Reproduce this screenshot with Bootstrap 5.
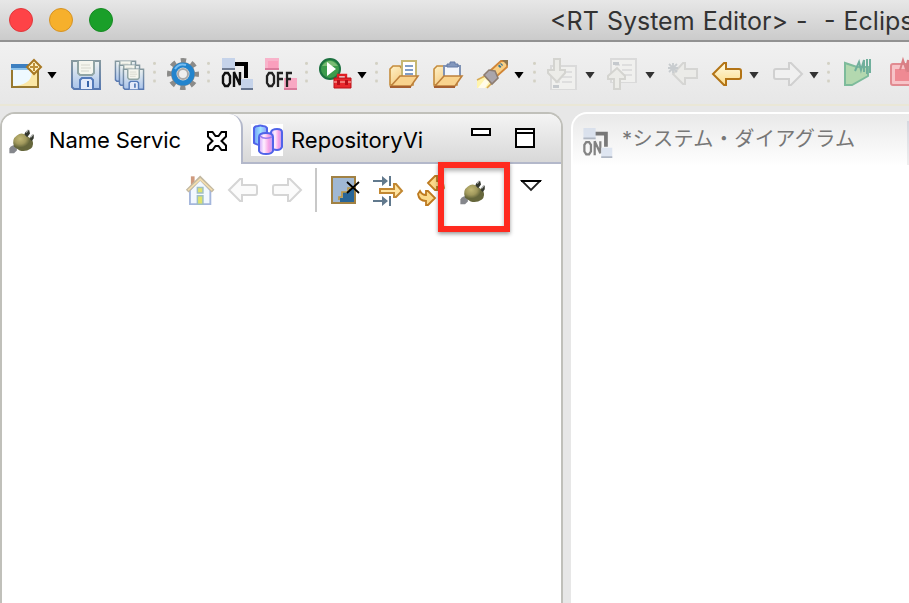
<!DOCTYPE html>
<html lang="ja">
<head>
<meta charset="utf-8">
<title>RT System Editor - Eclipse</title>
<meta name="viewport" content="width=device-width, initial-scale=1">
<link href="https://cdn.jsdelivr.net/npm/bootstrap@5.3.0/dist/css/bootstrap.min.css" rel="stylesheet">
<style>
body{height:603px;background:#e7e7e7;font-family:Inter,"Noto Sans CJK JP",sans-serif;color:#000}
svg{display:block;flex:none;overflow:visible}
.titlebar{height:42px;background:linear-gradient(#e7e7e7,#cbcbcb);border-bottom:2px solid #929292;padding-left:9px}
.light{width:24px;height:24px;margin-right:16px;border:1px solid}
.light-r{background:#fe4347;border-color:#e0383c}
.light-y{background:#f6b02c;border-color:#d59325}
.light-g{background:#1a9f29;border-color:#168a23}
.win-title{margin-left:421px;font-size:25px;line-height:40px;padding-top:2px;color:#333;white-space:pre;word-spacing:1.1px}
.toolbar{height:64px;padding-top:1px;background:linear-gradient(#f1f1f1,#e7e7e7);border-bottom:2px solid #eae7d6}
.g1{width:153px;padding-left:10px}.g2{width:54px}.g3{width:98px}.g4{width:70px}.g5{width:158px}.g6{width:294px}
.tool{width:32px;height:32px}
.tool+.tool{margin-left:12px}
.grip+.tool{margin-left:11px}
.g5 .grip+.tool{margin-left:10px}
.drop{width:10px;height:7px;margin:3px 0 0 5px;background:#000;clip-path:polygon(0 0,100% 0,50% 100%);flex:none}
.g4 .drop,.g5 .drop,.g6 .drop{margin-left:6px}
.drop+.tool{margin-left:13px}
.g6 .drop+.tool{margin-left:12px}
.drop.dim{background:#333}
.grip{width:3px;height:29px;flex:none;background:radial-gradient(circle,#d3d1c4 1.2px,transparent 1.7px) 0 0/3px 8.8px}
.workarea{padding-top:6px;height:497px}
.leftview{width:563px;border:2px solid #c0c0ba;border-bottom:0;border-radius:15px 15px 0 0;background:#fff}
.tabs{height:50px;background:linear-gradient(#f4f4f4,#d8d8d8);border-bottom:2px solid #b3b8ca;border-radius:13px 13px 0 0}
.tab-on{width:241px;height:50px;background:#fff;border-right:2px solid #b3b8ca;border-radius:13px 14px 0 0;padding-left:5px}
.tab-text{font-size:22px;line-height:50px;white-space:nowrap}
.t1{width:146px;margin-left:11px;padding-top:1px;letter-spacing:-.1px}
.t2{width:164px;margin-left:8px;padding-top:3px;letter-spacing:.02px}
.tab-off{padding-left:8px;height:48px}
.viewbar{height:52px;padding-left:181px}
.gap11{margin-left:11px}.gap12{margin-left:12px}
.vline{width:2px;height:44px;background:#c8c8c8;margin:0 12px 0 13px}
.plug{margin:3px 0 0 9px}
.menu{margin:-10px 0 0 32px}
.marker{left:438px;top:162px;width:72px;height:70px;border:6px solid #ff2a1f;box-shadow:0 2px 4px rgba(0,0,0,.4),inset 0 3px 4px rgba(0,0,0,.3)}
.editor{margin-left:8px;border:2px solid #fff;border-right:0;border-radius:16px 0 0 0;background:#fff}
.edtab{height:52px;background:linear-gradient(#e9e9e9,#fff);border-radius:14px 0 0 0;padding-left:9px}
.edname{font-size:20.2px;line-height:49px;margin-left:9px;letter-spacing:.3px;color:#777;white-space:nowrap}
.edicon{margin-top:14px;opacity:.5}
.edge{width:2px;height:44px;margin-top:7px;background:linear-gradient(#d5d7df,#efefef)}
</style>
<script src="https://cdn.jsdelivr.net/npm/bootstrap@5.3.0/dist/js/bootstrap.bundle.min.js"></script>
</head>
<body class="overflow-hidden m-0">
<svg width="0" height="0" class="position-absolute">
<defs>
<linearGradient id="gold" x2="0" y2="1"><stop stop-color="#fffbe2"/><stop offset="1" stop-color="#fbdc8b"/></linearGradient>
<linearGradient id="fold" x2="1" y2="1"><stop stop-color="#fff2c8"/><stop offset="1" stop-color="#f0b963"/></linearGradient>
<linearGradient id="disk" x2="0" y2="1"><stop stop-color="#edf2f0"/><stop offset="1" stop-color="#a9c3ea"/></linearGradient>
<linearGradient id="edge" x2="0" y2="1"><stop stop-color="#86999f"/><stop offset="1" stop-color="#5778b1"/></linearGradient>
<linearGradient id="cyl"><stop stop-color="#c9a0fb"/><stop offset=".35" stop-color="#fff0ff"/><stop offset=".7" stop-color="#f6a0e4"/><stop offset="1" stop-color="#b8a1fa"/></linearGradient>
<linearGradient id="cylb"><stop stop-color="#6f9df8"/><stop offset=".5" stop-color="#9fe4fd"/><stop offset="1" stop-color="#8d9bfa"/></linearGradient>
<radialGradient id="nut" cx=".35" cy=".3"><stop stop-color="#c2b875"/><stop offset=".6" stop-color="#a0985c"/><stop offset="1" stop-color="#66673c"/></radialGradient>
<symbol id="floppy" viewBox="0 0 32 32"><path d="M2 3h28v28H4l-2-2z" fill="url(#disk)" stroke="url(#edge)" stroke-width="2"/><path d="M8 3v12l2 2h12l2-2V3" fill="#f5f6ee" stroke="#91a5a5" stroke-width="2"/><path d="M11 7h9M11 10h10M11 13h8" stroke="#d5d6cc" stroke-width="1.2"/><path d="M10 31v-9l2-2h9l2 2v9" fill="#e3eafa" stroke="#557bb9" stroke-width="2"/><path d="M17 23h2v6h-2z" fill="#3864aa"/></symbol>
<symbol id="larrow" viewBox="0 0 32 32"><path d="M2 16 13 5h2v6h13q2 0 2 2v6q0 2-2 2H15v6h-2z"/></symbol>
<symbol id="link" viewBox="0 0 32 32"><path d="M13 6h12v14" fill="none" stroke="#000" stroke-width="4"/><path d="M1 0h13v12H1z" fill="#c5d3ea"/><path d="M1 10h13v2H1z" fill="#6f7c92"/><path d="M4 15h3l2 3v7l-2 3H4l-2-3v-7zM13 29V14l6 13V14" fill="none" stroke="#111" stroke-width="2.4"/><path d="M20 21h12v11H20z" fill="#c5d3ea"/><path d="M20 30h12v2H20z" fill="#66758e"/></symbol>
<symbol id="plug" viewBox="0 0 32 32"><path d="M2 24q2-4 8-4v6l-3 3H2z" fill="#85878c"/><path d="M7 22q-3-8 3-12 5-4 10 0l6 4q3 6-1 10-6 4-12 2z" fill="url(#nut)"/><path d="M18 9q1-4 5-5l1 4-3 4zM24 14q0-4 4-5v4l-2 3z" fill="#34372e"/><path d="m20 7 2-3M25 12l2-3" stroke="#b1b2b0" stroke-width="1.4"/></symbol>
<symbol id="folder" viewBox="0 0 32 32"><path d="M2 27V11l3-3h7l2 3h11v16z" fill="url(#fold)" stroke="#c58c3c" stroke-width="1.6"/></symbol>
<symbol id="flap" viewBox="0 0 32 32"><path d="M3 28 12 18h18l-7 10z" fill="#f9d38e" stroke="#bd803c" stroke-width="1.6"/><path d="M2 29h21" stroke="#a65f30" stroke-width="2"/></symbol>
<symbol id="doc" viewBox="0 0 32 32"><path d="M4 8h25v24H4z" fill="#f0f0ee" stroke="#dadada" stroke-width="2"/><path d="M8 14h5m2 0h10M15 19h10M8 24h5m2 0h10" stroke="#dedede" stroke-width="2"/></symbol>
</defs>
</svg>

<header class="titlebar d-flex align-items-center overflow-hidden">
<span class="light light-r rounded-circle flex-shrink-0"></span><span class="light light-y rounded-circle flex-shrink-0"></span><span class="light light-g rounded-circle flex-shrink-0"></span>
<span class="win-title flex-shrink-0">&lt;RT System Editor&gt; -  - Eclips</span>
</header>

<div class="toolbar d-flex overflow-hidden">
<div class="g1 d-flex align-items-center flex-shrink-0">
<svg class="tool" viewBox="0 0 32 32"><path d="M2 7h26v22H2z" fill="#eef9ff" stroke="#98792f" stroke-width="2"/><path d="M5 28Q23 26 22 12h5v16H5z" fill="#fbe7a5"/><path d="M1 6h19v5H1z" fill="#3d7fc0"/><path d="M1 10h19v2H1z" fill="#8dc2ea"/><path d="m24 2 7 7-7 7-7-7z" fill="#fff3c6" stroke="#a87822" stroke-width="2"/><path d="M24 5v8M20 9h8" stroke="#bd8f37" stroke-width="2"/></svg>
<i class="drop"></i>
<svg class="tool"><use href="#floppy"/></svg>
<svg class="tool" viewBox="0 0 32 32"><use href="#floppy" y="1" width="23" height="23"/><use href="#floppy" x="4" y="5" width="23" height="23"/><use href="#floppy" x="8" y="9" width="23" height="23"/></svg>
</div>
<div class="g2 d-flex align-items-center flex-shrink-0"><i class="grip"></i>
<svg class="tool" viewBox="0 0 32 32"><circle cx="16" cy="16" r="13.500" fill="none" stroke="#8b8b89" stroke-width="5" stroke-dasharray="5.3 5.3" stroke-dashoffset="2.6"/><circle cx="16" cy="16" r="12" fill="#888"/><circle cx="16" cy="16" r="9" fill="#e4e4e0" stroke="#2284cd" stroke-width="5"/><path d="M8 11q4-6 11-4" fill="none" stroke="#77bdf0" stroke-width="2"/><circle cx="16" cy="16" r="5" fill="#eee" stroke="#aaa" stroke-width="2"/></svg>
</div>
<div class="g3 d-flex align-items-center flex-shrink-0"><i class="grip"></i>
<svg class="tool"><use href="#link"/></svg>
<svg class="tool" viewBox="0 0 32 32"><path d="M0 0h14v12H0z" fill="#f8b3ca"/><path d="M3 3h10v8H3z" fill="#fa9fbd"/><path d="M19 20h13v12H19z" fill="#f8a8c3"/><path d="M19 30h13v2H19zM0 10h14v2H0z" fill="#d97a9b"/><path d="M4 15h3l2 3v7l-2 3H4l-2-3v-7zM13 29V15h5M13 21h5M22 29V15h5M22 21h4" fill="none" stroke="#222" stroke-width="2.3"/></svg>
</div>
<div class="g4 d-flex align-items-center flex-shrink-0"><i class="grip"></i>
<svg class="tool" viewBox="0 0 32 32"><circle cx="11" cy="11" r="10" fill="#3d9c4c" stroke="#1d7140" stroke-width="2"/><path d="M3 8q8-10 16 0" fill="#7abb74"/><path d="m8 4 9 7-9 7z" fill="#fff"/><path d="M19 21v-4h8v4" fill="none" stroke="#e02025" stroke-width="2.4"/><path d="M15 20h17v10H15z" fill="#e8282d" stroke="#b91018"/><path d="M15 24h17" stroke="#f79a92" stroke-width="1.4"/><path d="M18 22h3v5h-3zM26 22h3v5h-3z" fill="#b80e18"/></svg>
<i class="drop"></i>
</div>
<div class="g5 d-flex align-items-center flex-shrink-0"><i class="grip"></i>
<svg class="tool" viewBox="0 0 32 32"><use href="#folder"/><path d="M14 3h14v16H14z" fill="#fff" stroke="#c6b772" stroke-width="2"/><path d="M17 8h8M17 12h8M17 16h8" stroke="#577fb5" stroke-width="1.6"/><use href="#flap"/></svg>
<svg class="tool" viewBox="0 0 32 32"><use href="#folder"/><path d="M12 8h16v12H12z" fill="#f2f5fb" stroke="#8093b5" stroke-width="2"/><path d="M15 9V6h3V4h5v2h3v3z" fill="#8297bd" stroke="#647ba5"/><use href="#flap"/></svg>
<svg class="tool" viewBox="0 0 32 32"><path d="M1 22 9 17l7 8-5 5H1z" fill="#fff4ad"/><path d="m1 22 8-4 7 7-5 5" fill="none" stroke="#d8aa55" stroke-width="1.6"/><path d="m15 12 10-9h6v6L21 18z" fill="#f9cf84" stroke="#d18637" stroke-width="1.8"/><path d="m8 17 5-5 6 1 3 7-6 6z" fill="#aaa5ab" stroke="#8d7c70" stroke-width="1.6"/><path d="m23 9 3-3" stroke="#3d7796" stroke-width="3" stroke-dasharray="2 1"/><path d="M26 2h6v6z" fill="#8d754e"/><path d="M2 30 9 21l4 3-4 6z" fill="#fffbe9"/></svg>
<i class="drop"></i>
</div>
<div class="g6 d-flex align-items-center flex-shrink-0"><i class="grip"></i>
<svg class="tool" viewBox="0 0 32 32"><use href="#doc"/><path d="M6 27h6v3H6z" fill="#c5c9cd"/><path d="M7 1h6v11h5v3l-8 9-9-9v-3h6z" fill="#ecece8" stroke="#d4d4d0" stroke-width="2"/></svg>
<i class="drop dim"></i>
<svg class="tool" viewBox="0 0 32 32"><use href="#doc" y="-7"/><path d="M6 4h6v3H6z" fill="#c5c9cd"/><path d="M7 31h6V21h5v-3l-8-8-9 8v3h6z" fill="#ecece8" stroke="#d4d4d0" stroke-width="2"/></svg>
<i class="drop dim"></i>
<svg class="tool" viewBox="0 0 32 32"><path d="M6 16 16 5h2v6h12v9H18v6h-2z" fill="#ebebe8" stroke="#d5d5d3" stroke-width="2"/><path d="M6 5v10M1 10h10M2 6l8 8M10 6l-8 8" stroke="#c8cccf" stroke-width="1.8"/></svg>
<svg class="tool" fill="url(#gold)" stroke="#b37415" stroke-width="2"><use href="#larrow"/></svg>
<i class="drop dim"></i>
<svg class="tool" viewBox="0 0 32 32" fill="#f0f0f0" stroke="#d0d0d0" stroke-width="2"><use href="#larrow" transform="matrix(-1 0 0 1 33 0)" width="32" height="32"/></svg>
<i class="drop dim"></i>
</div>
<div class="d-flex align-items-center flex-shrink-0"><i class="grip"></i>
<svg class="tool" viewBox="-1 0 32 32"><path d="M3 5v22h7l16-9V9H15z" fill="#b3d8af" stroke="#7dbb9b" stroke-width="2"/><path d="m13 13 4-9 2 8 3-10v12M25 1v15M28 1v14" fill="none" stroke="#70af9c" stroke-width="2"/></svg>
<svg class="tool" viewBox="-5 0 32 32"><rect x="1" y="6" width="27" height="21" rx="2" fill="#f7c4c8" stroke="#e18b91" stroke-width="2"/><path d="M5 11h20v12H5z" fill="#ef8a93"/><path d="m10 12 3-10 3 9 2-9v12" fill="none" stroke="#d97f85" stroke-width="2"/></svg>
</div>
</div>

<main class="workarea d-flex">
<section class="leftview flex-shrink-0">
<div class="tabs d-flex">
<div class="tab-on d-flex align-items-center flex-shrink-0">
<svg class="mt-1" width="31" height="30"><use href="#plug"/></svg><span class="tab-text t1">Name Servic</span>
<svg class="gap11 mt-1" width="22" height="22" viewBox="0 0 22 22"><path d="M2 2h4.500L9.500 6h3L15.500 2H20v4.500L15.500 11 20 15.500V20h-4.500l-3-4h-3l-3 4H2v-4.500L6.500 11 2 6.500z" fill="#fff" stroke="#000" stroke-width="2"/></svg>
</div>
<div class="tab-off d-flex align-items-center flex-shrink-0">
<svg class="mt-1" width="32" height="32" viewBox="0 0 32 32"><path fill="#fff" d="M0 0h32v32H0z"/><g stroke="#5063e9" stroke-width="2"><path fill="url(#cylb)" d="M3 4q1-2 4-2 2-1 5 0 3 0 4 2v15q-2 2-6 2t-7-2z"/><path fill="url(#cyl)" d="M20 8q1-3 6-3t5 3v15q-1 3-5 3t-6-3z"/><path fill="url(#cyl)" d="M8 13q0-4 7-4t7 4v14q-1 3-7 3t-7-3z"/></g><path d="M9 12q4 4 12 1" fill="none" stroke="#9a79f1" stroke-width="1.5"/></svg>
<span class="tab-text t2">RepositoryVi</span>
</div>
<div class="d-flex gap-4 mt-3 ms-3">
<svg width="20" height="20" viewBox="0 -1 20 20"><path d="M1-2h18v6H1z" fill="#fff" stroke="#000" stroke-width="2"/></svg>
<svg width="20" height="20" viewBox="0 -1 20 20"><path d="M1-2h18v18H1zM0 2h20" fill="#fff" stroke="#000" stroke-width="2"/></svg>
</div>
</div>
<div class="viewbar d-flex align-items-center">
<svg width="32" height="32" viewBox="-2.500 -1.500 34.500 34.500"><path d="M6 1h4v12H6z" fill="#cf9a7e"/><path d="M5 16v15h22V16L16 4z" fill="#f2f8ff" stroke="#a4b6dc" stroke-width="2"/><path d="M2 17 16 3l14 14" fill="none" stroke="#c3b9a2" stroke-width="4"/><path d="M3 16 16 4l13 12" fill="none" stroke="#f5dfaf" stroke-width="1.6"/><path d="M13 13h6v6h-6zM13 22h6v9h-6z" fill="#dfe36b" stroke="#9fbfc3" stroke-width="1.6"/></svg>
<svg class="gap12" width="32" height="32" fill="#fbfbfb" stroke="#d5d5d5" stroke-width="2"><use href="#larrow"/></svg>
<svg class="gap11" width="32" height="32" viewBox="0 0 32 32" fill="#fbfbfb" stroke="#d5d5d5" stroke-width="2"><use href="#larrow" transform="matrix(-1 0 0 1 33 0)" width="32" height="32"/></svg>
<span class="vline"></span>
<svg width="32" height="32" viewBox="0 0 32 32"><path d="M3 3h23v26H3z" fill="#a0b8d3" stroke="#a18143" stroke-width="2"/><path d="M11 28v-4h3v-6h6v-3h5v13z" fill="#286597"/><path d="M10 26v-3h3v-5h6v-4h5" fill="none" stroke="#bd963f" stroke-width="1.6"/><path d="m18 8 12 11M30 8 18 19" stroke="#000" stroke-width="1.8"/></svg>
<svg class="gap12" width="32" height="32" viewBox="0 0 32 32"><path d="M0 7h13M0 27h13" stroke="#61798d" stroke-width="2"/><path d="m9 2 6 5-6 5zM9 22l6 5-6 5z" fill="#61798d"/><path d="M17 2v10M17 22v10" stroke="#61798d" stroke-width="2"/><path d="M7 15h14v-5h2l6 7-6 6h-2v-4H7z" fill="#ffe4a0" stroke="#c28832" stroke-width="2"/></svg>
<svg class="gap12" width="32" height="32" viewBox="0 0 32 32"><g fill="#fbd98a" stroke="#bd7a20" stroke-width="1.800"><path d="m11 9 7-7h2v5q7 0 7 7l-2 3q-2-4-5-4v3h-2z"/><path d="m18 24-7 7H9v-4q-7 0-8-7l2-3q2 4 6 4v-4h2z"/></g></svg>
<svg class="plug" width="31" height="30"><use href="#plug"/></svg>
<svg class="menu" width="20" height="11" viewBox="0 0 20 11"><path d="M1 1h18l-9 9z" fill="#fff" stroke="#222" stroke-width="1.8"/><path d="M0 1h20" stroke="#000" stroke-width="2"/></svg>
</div>
</section>
<section class="editor flex-grow-1">
<div class="edtab d-flex">
<svg class="edicon" width="31" height="30" viewBox="0 0 32 32"><use href="#link"/></svg>
<span class="edname">*システム・ダイアグラム</span>
<span class="edge ms-auto"></span>
</div>
</section>
</main>
<div class="marker position-absolute"></div>
</body>
</html>
